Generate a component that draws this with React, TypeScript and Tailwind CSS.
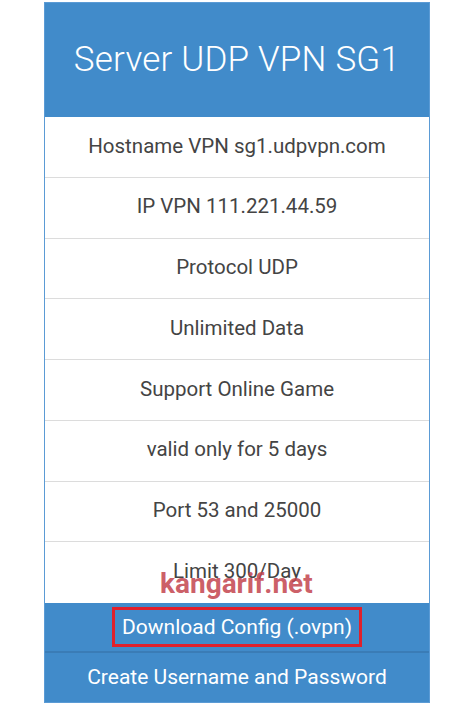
export default function App() {
  const rows = [
    "Hostname VPN sg1.udpvpn.com",
    "IP VPN 111.221.44.59",
    "Protocol UDP",
    "Unlimited Data",
    "Support Online Game",
    "valid only for 5 days",
    "Port 53 and 25000",
    "Limit 300/Day",
  ];

  return (
    <div
      className="w-[474px] h-[709px] bg-white pt-[2px]"
      style={{ fontFamily: "Roboto, 'Liberation Sans', sans-serif" }}
    >
      <div className="ml-[44px] w-[386px] border border-[#5b9bd5] bg-white">
        <div className="h-[114px] bg-[#418bca] flex items-center justify-center">
          <h1 className="text-white text-[35px] font-light tracking-[0.2px]">Server UDP VPN SG1</h1>
        </div>

        {rows.map((r, i) => (
          <div
            key={r}
            className={`relative h-[60.75px] flex items-center justify-center text-[20.5px] text-[#444] ${
              i < rows.length - 1 ? "border-b border-[#dcdcdc]" : ""
            }`}
          >
            <span className="-mt-[2px]">{r}</span>
            {i === rows.length - 1 && (
              <span className="absolute left-[115px] top-[28px] text-[28px] font-bold text-[#c3434d]/85 leading-none">
                kangarif.net
              </span>
            )}
          </div>
        ))}

        <div className="h-[50px] bg-[#418bca] border-b-2 border-[#3a7cb6] flex items-center justify-center">
          <span className="border-[3px] border-[#e0202c] px-[7px] py-[3px] text-white text-[21px] leading-[28px]">
            Download Config (.ovpn)
          </span>
        </div>
        <div className="h-[49px] bg-[#418bca] flex items-center justify-center text-white text-[21px]">
          Create Username and Password
        </div>
      </div>
    </div>
  );
}
